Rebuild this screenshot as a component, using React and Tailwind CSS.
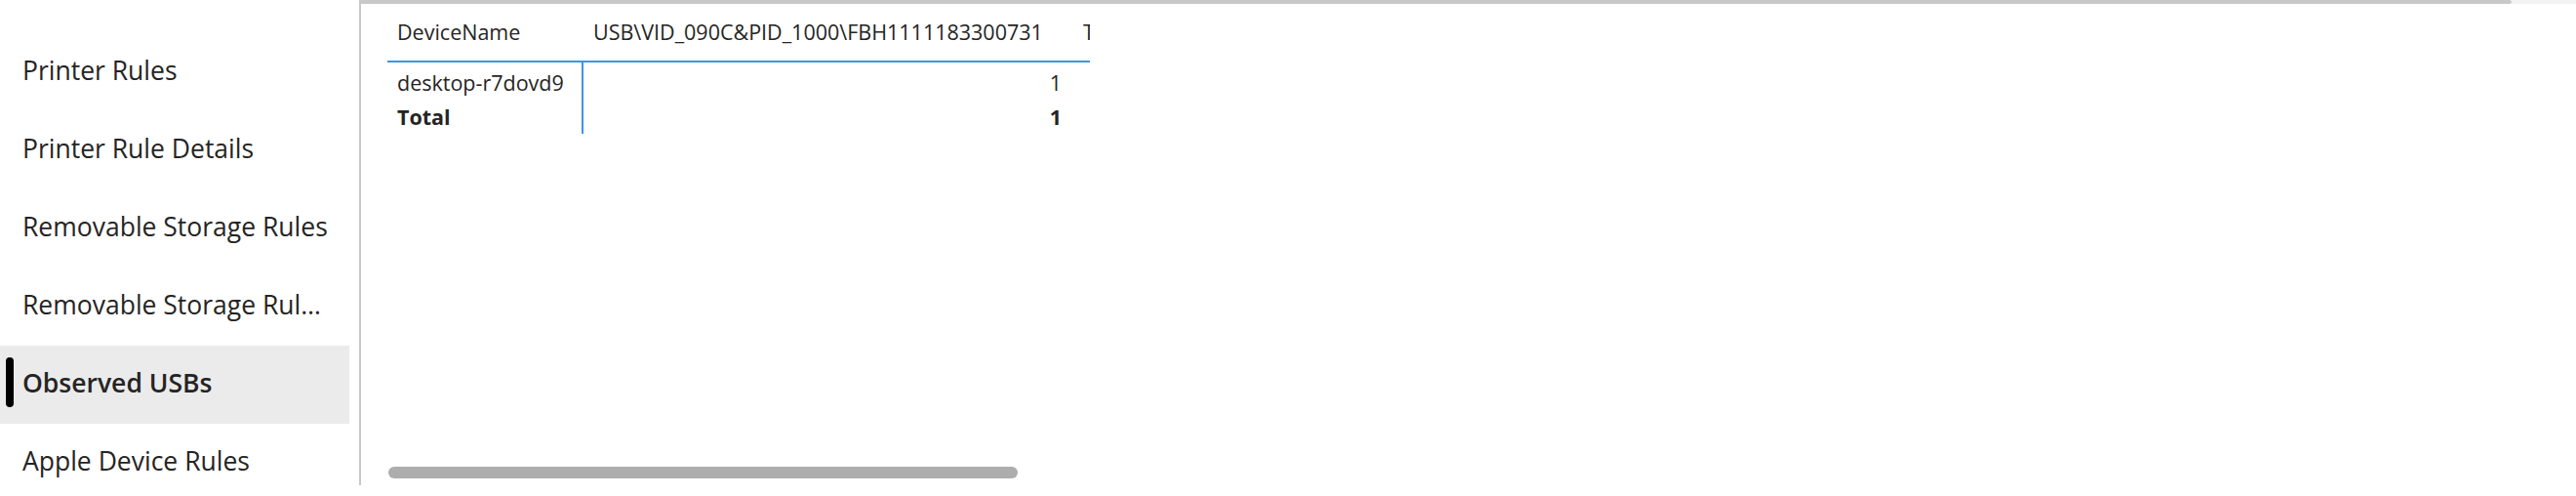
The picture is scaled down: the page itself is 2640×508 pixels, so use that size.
import React from 'react';

const navItems = [
  { label: 'Printer Rules' },
  { label: 'Printer Rule Details' },
  { label: 'Removable Storage Rules' },
  { label: 'Removable Storage Rul…', title: 'Removable Storage Rule Details' },
  { label: 'Observed USBs', active: true },
  { label: 'Apple Device Rules' },
];

const rows = [{ name: 'desktop-r7dovd9', value: '1' }];

export default function App() {
  return (
    <div
      className="w-[2640px] h-[508px] flex bg-white overflow-hidden text-[#252423]"
      style={{ fontFamily: "'Open Sans', 'Noto Sans', sans-serif" }}
    >
      {/* Page navigation */}
      <nav className="w-[368px] shrink-0 flex flex-col pt-[34px]">
        {navItems.map((item) => (
          <div
            key={item.label}
            title={item.title || item.label}
            className={`relative w-[358px] h-[80px] shrink-0 flex items-center pl-[23px] pb-[3px] text-[26.5px] ${
              item.active ? 'bg-[#ebebeb] font-semibold' : ''
            }`}
          >
            {item.active && (
              <span className="absolute left-[6px] top-[12px] w-[8px] h-[51px] rounded-full bg-black"></span>
            )}
            <span className="whitespace-nowrap">{item.label}</span>
          </div>
        ))}
      </nav>

      {/* Report canvas */}
      <main className="flex-1 h-[497px] border-l-2 border-[#c8c8c8] flex flex-col">
        <div className="h-[4px] flex shrink-0">
          <div className="flex-1 bg-[#c8c8c8] rounded-r-[3px]"></div>
          <div className="w-[66px] bg-[#f3f3f3]"></div>
        </div>

        <div className="flex-1 flex flex-col pl-[27px]">
          {/* Matrix */}
          <div className="w-[720px] overflow-hidden text-[21.5px]">
            <div className="flex border-b-2 border-[#3c96e6] pt-[14px] pb-[14px] leading-[30px] whitespace-nowrap">
              <div className="w-[201px] shrink-0 pl-[10px]">DeviceName</div>
              <div className="w-[502px] shrink-0 pl-[10px]">USB\VID_090C&amp;PID_1000\FBH1111183300731</div>
              <div className="shrink-0 pl-[10px]">Total</div>
            </div>
            <div className="flex pb-[2px]">
              <div className="w-[201px] shrink-0 border-r-2 border-[#3c96e6] pt-[3px]">
                {rows.map((r) => (
                  <div key={r.name} className="h-[35px] leading-[35px] pl-[10px] whitespace-nowrap">
                    {r.name}
                  </div>
                ))}
                <div className="h-[35px] leading-[35px] pl-[10px] font-bold">Total</div>
              </div>
              <div className="w-[502px] shrink-0 pt-[3px]">
                {rows.map((r) => (
                  <div key={r.name} className="h-[35px] leading-[35px] pr-[12px] text-right">
                    {r.value}
                  </div>
                ))}
                <div className="h-[35px] leading-[35px] pr-[12px] text-right font-bold">1</div>
              </div>
            </div>
          </div>

          {/* Horizontal scrollbar */}
          <div className="mt-auto mb-[7px] w-[645px] h-[12px] ml-[1px] rounded-full bg-[#adadad]"></div>
        </div>
      </main>
    </div>
  );
}
